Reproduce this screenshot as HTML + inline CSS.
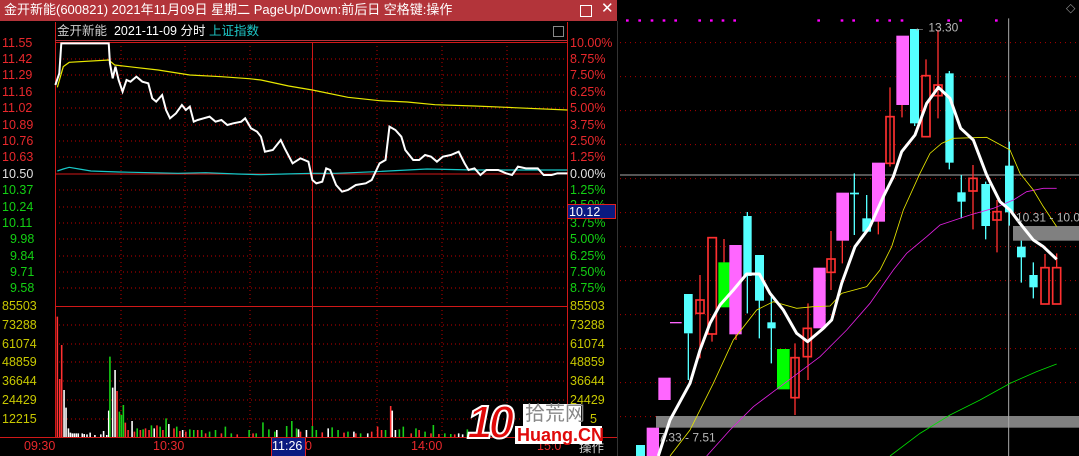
<!DOCTYPE html>
<html><head><meta charset="utf-8"><style>
html,body{margin:0;padding:0;background:#000;width:1079px;height:456px;overflow:hidden}
body{position:relative;font-family:"Liberation Sans","Noto Sans CJK SC",sans-serif}
.t{position:absolute;font-size:12.5px;line-height:14px;white-space:nowrap}
.r{color:#e8282c}.g{color:#13d013}.y{color:#c8c800}.w{color:#e0e0e0}
</style></head><body>
<!-- title bar -->
<div style="position:absolute;left:0;top:0;width:617px;height:21px;background:#b3343a"></div>
<div class="t" style="left:4px;top:3px;color:#fff;font-size:13px">金开新能(600821) 2021年11月09日 星期二 PageUp/Down:前后日 空格键:操作</div>
<div style="position:absolute;left:580px;top:5px;width:10px;height:10px;border:1px solid #fff"></div>
<div class="t" style="left:601px;top:2px;color:#fff;font-size:15px">✕</div>
<!-- subheader -->
<div class="t" style="left:57px;top:24px;color:#ccc">金开新能 <span style="color:#fff">&nbsp;2021-11-09 分时</span> <span style="color:#1ec8c8">上证指数</span></div>
<div style="position:absolute;left:553px;top:26px;width:9px;height:9px;border:1px solid #888"></div>

<svg style="position:absolute;left:0;top:0" width="620" height="456">
 <g stroke="#c00000" stroke-width="1" stroke-dasharray="1,3">
  <line x1="55" y1="59" x2="567" y2="59"/><line x1="55" y1="75" x2="567" y2="75"/><line x1="55" y1="92" x2="567" y2="92"/><line x1="55" y1="108" x2="567" y2="108"/><line x1="55" y1="125" x2="567" y2="125"/><line x1="55" y1="141" x2="567" y2="141"/><line x1="55" y1="157" x2="567" y2="157"/><line x1="55" y1="190" x2="567" y2="190"/><line x1="55" y1="207" x2="567" y2="207"/><line x1="55" y1="223" x2="567" y2="223"/><line x1="55" y1="239" x2="567" y2="239"/><line x1="55" y1="256" x2="567" y2="256"/><line x1="55" y1="272" x2="567" y2="272"/><line x1="55" y1="288" x2="567" y2="288"/>
  <line x1="55" y1="325" x2="567" y2="325"/><line x1="55" y1="344" x2="567" y2="344"/><line x1="55" y1="362" x2="567" y2="362"/><line x1="55" y1="381" x2="567" y2="381"/><line x1="55" y1="400" x2="567" y2="400"/><line x1="55" y1="419" x2="567" y2="419"/>
  <line x1="121" y1="42" x2="121" y2="437"/><line x1="185" y1="42" x2="185" y2="437"/><line x1="250" y1="42" x2="250" y2="437"/><line x1="377" y1="42" x2="377" y2="437"/><line x1="442" y1="42" x2="442" y2="437"/><line x1="507" y1="42" x2="507" y2="437"/>
 </g>
 <g stroke="#d01818" stroke-width="1">
  <line x1="55" y1="42.5" x2="567" y2="42.5"/><line x1="55" y1="306.5" x2="567" y2="306.5"/><line x1="0" y1="437.5" x2="617" y2="437.5"/>
  <line x1="55.5" y1="22" x2="55.5" y2="437"/><line x1="567.5" y1="22" x2="567.5" y2="437"/><line x1="312.5" y1="42" x2="312.5" y2="437"/>
  <line x1="55" y1="40.5" x2="567" y2="40.5" stroke="#b3343a"/>
  <line x1="55" y1="174" x2="567" y2="174"/>
  <line x1="617.5" y1="21" x2="617.5" y2="456" stroke="#333"/>
 </g>
</svg>
<!-- price lines -->
<svg style="position:absolute;left:0;top:0" width="620" height="200" viewBox="0 0 1568 600" preserveAspectRatio="none">
 <polyline fill="none" stroke="#18c8c8" stroke-width="1.2" vector-effect="non-scaling-stroke" points="145,513 160,507 175,502 200,507 230,513 300,516 380,518 450,520 520,518 600,522 660,524 720,522 790,520 850,520 950,515 1080,507 1200,510 1300,510 1435,510"/>
 <polyline fill="none" stroke="#e8e800" stroke-width="1.2" vector-effect="non-scaling-stroke" points="145,262 160,200 175,187 275,180 290,195 340,202 400,210 480,225 560,230 630,236 660,240 730,258 790,270 880,292 960,302 1030,306 1100,314 1200,318 1300,323 1435,330"/>
 <polyline fill="none" stroke="#fff" stroke-width="2" vector-effect="non-scaling-stroke" points="140,255 150,220 155,130 275,130 278,190 285,235 292,200 300,240 310,275 320,240 330,245 345,230 360,245 375,250 385,295 395,305 410,285 420,330 430,355 445,340 460,315 470,330 480,320 490,365 500,360 515,355 530,350 545,365 560,360 575,375 590,370 610,365 620,355 635,385 650,395 660,410 670,455 690,450 710,420 720,445 740,490 760,475 780,485 790,540 800,550 815,545 825,505 835,510 850,555 865,575 880,570 900,555 925,550 940,540 960,490 975,480 985,380 1000,390 1015,410 1025,450 1035,465 1045,480 1060,480 1075,465 1090,470 1105,485 1120,470 1140,465 1160,455 1175,490 1185,510 1200,505 1215,525 1230,510 1260,510 1280,520 1295,525 1310,500 1330,505 1360,505 1375,525 1395,525 1410,520 1435,520"/>
</svg>
<!-- volume -->
<svg style="position:absolute;left:0;top:200px" width="620" height="256" viewBox="0 0 1568 768" preserveAspectRatio="none">
 <g stroke-width="4">
  <path stroke="#ff3030" d="M145 711V350M151 711V537M156 711V435M296 711V573M317 711V668M324 711V690M340 711V695M355 711V690M368 711V685M377 711V690M397 711V676M412 711V690M440 711V685M455 711V693M470 711V695M500 711V690M520 711V700M560 711V700M600 711V703M640 711V700M700 711V700M760 711V695M815 711V697M870 711V698M900 711V700M940 711V695M955 711V680M965 711V690M988 711V618M1040 711V700M1060 711V690M1090 711V700M1110 711V702M1150 711V703"/>
  <path stroke="#fff" d="M162 711V570M167 711V623M173 711V685M178 711V698M183 711V700M188 711V700M193 711V700M198 711V700M208 711V700M213 711V702M220 711V703M228 711V698M240 711V705M255 711V703M262 711V693M270 711V705M275 711V632M285 711V563M291 711V510M334 711V663M390 711V685M427 711V672M462 711V690M700 711V690M755 711V688M775 711V690M830 711V685M895 711V695M930 711V700M992 711V632M1000 711V690M1160 711V700M1170 711V703"/>
  <path stroke="#18d018" d="M278 711V470M302 711V635M307 711V645M312 711V615M347 711V685M362 711V688M383 711V676M405 711V680M420 711V655M447 711V680M480 711V688M490 711V690M510 711V690M530 711V695M545 711V690M570 711V680M585 711V700M630 711V690M648 711V700M665 711V667M680 711V688M695 711V695M725 711V678M738 711V663M750 711V685M790 711V678M800 711V690M840 711V682M855 711V690M880 711V695M912 711V700M975 711V690M1010 711V688M1020 711V680M1052 711V685M1075 711V695M1096 711V675M1125 711V700M1140 711V702M1182 711V688"/>
 </g>
</svg>
<!-- left labels -->
<div class="t r" style="left:2px;top:36px">11.55</div>
<div class="t r" style="left:2px;top:52px">11.42</div>
<div class="t r" style="left:2px;top:68px">11.29</div>
<div class="t r" style="left:2px;top:85px">11.16</div>
<div class="t r" style="left:2px;top:101px">11.02</div>
<div class="t r" style="left:2px;top:118px">10.89</div>
<div class="t r" style="left:2px;top:134px">10.76</div>
<div class="t r" style="left:2px;top:150px">10.63</div>
<div class="t w" style="left:2px;top:167px">10.50</div>
<div class="t g" style="left:2px;top:183px">10.37</div>
<div class="t g" style="left:2px;top:200px">10.24</div>
<div class="t g" style="left:2px;top:216px">10.11</div>
<div class="t g" style="left:10px;top:232px">9.98</div>
<div class="t g" style="left:10px;top:249px">9.84</div>
<div class="t g" style="left:10px;top:265px">9.71</div>
<div class="t g" style="left:10px;top:281px">9.58</div>
<div class="t y" style="left:2px;top:299px">85503</div>
<div class="t y" style="left:2px;top:318px">73288</div>
<div class="t y" style="left:2px;top:337px">61074</div>
<div class="t y" style="left:2px;top:355px">48859</div>
<div class="t y" style="left:2px;top:374px">36644</div>
<div class="t y" style="left:2px;top:393px">24429</div>
<div class="t y" style="left:2px;top:412px">12215</div>
<!-- right labels -->
<div class="t r" style="left:570px;top:36px">10.00%</div>
<div class="t r" style="left:570px;top:52px">8.75%</div>
<div class="t r" style="left:570px;top:68px">7.50%</div>
<div class="t r" style="left:570px;top:85px">6.25%</div>
<div class="t r" style="left:570px;top:101px">5.00%</div>
<div class="t r" style="left:570px;top:118px">3.75%</div>
<div class="t r" style="left:570px;top:134px">2.50%</div>
<div class="t r" style="left:570px;top:150px">1.25%</div>
<div class="t w" style="left:570px;top:167px">0.00%</div>
<div class="t g" style="left:570px;top:183px">1.25%</div>
<div class="t g" style="left:570px;top:198px">2.50%</div>
<div class="t g" style="left:570px;top:216px">3.75%</div>
<div class="t g" style="left:570px;top:232px">5.00%</div>
<div class="t g" style="left:570px;top:249px">6.25%</div>
<div class="t g" style="left:570px;top:265px">7.50%</div>
<div class="t g" style="left:570px;top:281px">8.75%</div>
<div style="position:absolute;left:567px;top:204px;width:49px;height:15px;background:#0a1a80;border:1px solid #e02020;box-sizing:border-box"></div>
<div class="t" style="left:569px;top:205px;color:#fff">10.12</div>
<div class="t y" style="left:570px;top:299px">85503</div>
<div class="t y" style="left:570px;top:318px">73288</div>
<div class="t y" style="left:570px;top:337px">61074</div>
<div class="t y" style="left:570px;top:355px">48859</div>
<div class="t y" style="left:570px;top:374px">36644</div>
<div class="t y" style="left:570px;top:393px">24429</div>
<div class="t y" style="left:590px;top:412px">5</div>
<!-- time axis -->
<div class="t r" style="left:24px;top:439px">09:30</div>
<div class="t r" style="left:153px;top:439px">10:30</div>
<div style="position:absolute;left:271px;top:438px;width:33px;height:18px;background:#0a1a80;border-left:1px solid #e02020;border-right:1px solid #e02020"></div>
<div class="t" style="left:272px;top:439px;color:#fff">11:26</div>
<div class="t r" style="left:305px;top:439px">0</div>
<div class="t r" style="left:411px;top:439px">14:00</div>
<div class="t r" style="left:537px;top:439px">15:0</div>
<div class="t" style="left:579px;top:441px;color:#ccc">操作</div>
<!-- logo -->
<div class="t" style="left:467px;top:398px;font-size:46px;line-height:48px;font-weight:bold;color:#e00a0a;letter-spacing:-4px;-webkit-text-stroke:2px #fff;font-style:italic">10</div>
<div style="position:absolute;left:523px;top:404px;width:58px;height:22px;background:#fff"></div>
<div class="t" style="left:525px;top:402px;font-size:20px;line-height:24px;color:#888">拾荒网</div>
<div style="position:absolute;left:515px;top:426px;width:87px;height:18px;background:#fff"></div>
<div class="t" style="left:517px;top:425px;font-size:18px;line-height:20px;color:#e00a0a;font-weight:bold">Huang.CN</div>

<!-- right candlestick panel -->
<svg style="position:absolute;left:620px;top:0" width="459" height="456" viewBox="0 0 1377 1368">
 <rect x="0" y="0" width="1377" height="1368" fill="#000"/>
 <g stroke="#b00000" stroke-width="3" stroke-dasharray="3,12">
  <line x1="0" y1="128" x2="1377" y2="128"/><line x1="0" y1="230" x2="1377" y2="230"/><line x1="0" y1="332" x2="1377" y2="332"/><line x1="0" y1="434" x2="1377" y2="434"/><line x1="0" y1="536" x2="1377" y2="536"/><line x1="0" y1="638" x2="1377" y2="638"/><line x1="0" y1="740" x2="1377" y2="740"/><line x1="0" y1="842" x2="1377" y2="842"/><line x1="0" y1="944" x2="1377" y2="944"/><line x1="0" y1="1046" x2="1377" y2="1046"/><line x1="0" y1="1148" x2="1377" y2="1148"/><line x1="0" y1="1250" x2="1377" y2="1250"/>
 </g>
 <g fill="#ff00ff"><rect x="18" y="58" width="8" height="7"/><rect x="55" y="58" width="8" height="7"/><rect x="92" y="58" width="8" height="7"/><rect x="128" y="58" width="8" height="7"/><rect x="163" y="58" width="8" height="7"/><rect x="235" y="58" width="8" height="7"/><rect x="270" y="58" width="8" height="7"/><rect x="305" y="58" width="8" height="7"/><rect x="340" y="58" width="8" height="7"/><rect x="592" y="58" width="8" height="7"/><rect x="662" y="58" width="8" height="7"/><rect x="697" y="58" width="8" height="7"/><rect x="768" y="58" width="8" height="7"/><rect x="805" y="58" width="8" height="7"/><rect x="842" y="58" width="8" height="7"/><rect x="982" y="58" width="8" height="7"/><rect x="1018" y="58" width="8" height="7"/><rect x="1125" y="58" width="8" height="7"/></g>
 <rect x="108" y="1248" width="1269" height="35" fill="#808080"/>
 <rect x="1179" y="678" width="198" height="44" fill="#808080"/>
 <line x1="0" y1="525" x2="1377" y2="525" stroke="#aaa" stroke-width="3"/>
 <line x1="1166" y1="55" x2="1166" y2="1368" stroke="#aaa" stroke-width="3"/>
 <!-- wicks -->
 <g stroke-width="4">
  <path stroke="#55ffff" d="M205 1000V1140M382 636V940M418 900V1015M454 890V1090M703 520V705M740 585V695M988 213V508M1024 525V655M1097 545V718M1168 425V677M1204 722V848M1240 787V895M884 370V378"/>
  <path stroke="#ff3030" d="M240 825V1075M276 1000V1025M564 910V1140M525 1030V1245M633 693V870M667 722V790M775 665V703M810 262V500M846 315V352M918 178V230M954 90V355M1059 495V688M1131 600V757M1275 762V805M1310 760V805M312 717V787M348 1003V1020"/>
 </g>
 <!-- bodies -->
 <rect x="48" y="1335" width="27" height="33" fill="#55ffff"/>
 <rect x="80" y="1283" width="37" height="85" fill="#ff66ff"/>
 <rect x="115" y="1133" width="37" height="67" fill="#ff66ff"/>
 <rect x="150" y="966" width="35" height="4" fill="#ff66ff"/>
 <rect x="192" y="882" width="26" height="118" fill="#55ffff"/>
 <rect x="228" y="900" width="24" height="40" fill="none" stroke="#ff3030" stroke-width="5"/>
 <rect x="264" y="713" width="25" height="289" fill="none" stroke="#ff3030" stroke-width="5"/>
 <rect x="295" y="787" width="37" height="135" fill="#00ff00"/>
 <rect x="328" y="735" width="37" height="268" fill="#ff66ff"/>
 <rect x="370" y="648" width="25" height="180" fill="#55ffff"/>
 <rect x="405" y="765" width="27" height="137" fill="#55ffff"/>
 <rect x="442" y="967" width="25" height="18" fill="#55ffff"/>
 <rect x="471" y="1047" width="38" height="121" fill="#00ff00"/>
 <rect x="513" y="1073" width="24" height="120" fill="none" stroke="#ff3030" stroke-width="5"/>
 <rect x="550" y="985" width="24" height="85" fill="none" stroke="#ff3030" stroke-width="5"/>
 <rect x="580" y="803" width="37" height="182" fill="#ff66ff"/>
 <rect x="621" y="777" width="24" height="40" fill="none" stroke="#ff3030" stroke-width="5"/>
 <rect x="649" y="578" width="38" height="144" fill="#ff66ff"/>
 <rect x="690" y="578" width="27" height="5" fill="#55ffff"/>
 <rect x="727" y="655" width="26" height="40" fill="#55ffff"/>
 <rect x="756" y="488" width="39" height="177" fill="#ff66ff"/>
 <rect x="798" y="350" width="24" height="140" fill="none" stroke="#ff3030" stroke-width="5"/>
 <rect x="829" y="107" width="38" height="208" fill="#ff66ff"/>
 <rect x="870" y="87" width="27" height="283" fill="#55ffff"/>
 <rect x="906" y="227" width="24" height="183" fill="none" stroke="#ff3030" stroke-width="5"/>
 <rect x="942" y="255" width="24" height="32" fill="none" stroke="#ff3030" stroke-width="5"/>
 <rect x="976" y="220" width="25" height="268" fill="#55ffff"/>
 <rect x="1012" y="577" width="25" height="28" fill="#55ffff"/>
 <rect x="1047" y="535" width="24" height="38" fill="none" stroke="#ff3030" stroke-width="5"/>
 <rect x="1084" y="552" width="26" height="126" fill="#55ffff"/>
 <rect x="1119" y="635" width="24" height="25" fill="none" stroke="#ff3030" stroke-width="5"/>
 <rect x="1155" y="497" width="26" height="140" fill="#55ffff"/>
 <rect x="1191" y="740" width="26" height="32" fill="#55ffff"/>
 <rect x="1228" y="825" width="25" height="37" fill="#55ffff"/>
 <rect x="1263" y="803" width="24" height="109" fill="none" stroke="#ff3030" stroke-width="5"/>
 <rect x="1298" y="803" width="24" height="109" fill="none" stroke="#ff3030" stroke-width="5"/>
 <!-- MAs -->
 <polyline fill="none" stroke="#00e000" stroke-width="2.5" points="810,1368 900,1300 990,1245 1080,1200 1170,1150 1250,1115 1310,1092"/>
 <polyline fill="none" stroke="#e020e0" stroke-width="2.5" points="260,1368 330,1290 400,1220 460,1175 520,1130 600,1070 680,990 750,910 820,810 860,760 920,710 960,675 1050,645 1120,625 1180,600 1220,575 1270,565 1310,565"/>
 <polyline fill="none" stroke="#e8e800" stroke-width="2.5" points="150,1368 210,1290 280,1150 340,1020 410,930 460,905 530,925 580,920 630,918 665,880 740,860 780,810 815,740 850,630 900,520 930,460 965,430 1000,415 1060,413 1100,412 1170,450 1200,520 1240,570 1270,620 1310,680"/>
 <polyline fill="none" stroke="#fff" stroke-width="9" stroke-linejoin="round" points="115,1368 150,1260 210,1150 240,1050 270,970 300,915 340,870 380,822 418,822 450,880 490,930 530,1000 563,1025 610,985 635,960 665,850 705,740 750,680 790,590 820,530 845,455 885,405 920,310 955,262 990,295 1022,385 1060,420 1100,525 1140,605 1170,630 1200,670 1240,720 1270,740 1310,778"/>
 <g font-family="Liberation Sans, sans-serif" font-size="36" fill="#b8b8b8">
  <text x="880" y="95">←</text><text x="925" y="95">13.30</text>
  <text x="1188" y="665">10.31 - 10.0</text>
  <text x="115" y="1325">7.33 - 7.51</text>
 </g>
 <rect x="1343" y="17" width="18" height="18" fill="none" stroke="#888" stroke-width="2" transform="rotate(45 1352 26)"/>
</svg>
</body></html>
